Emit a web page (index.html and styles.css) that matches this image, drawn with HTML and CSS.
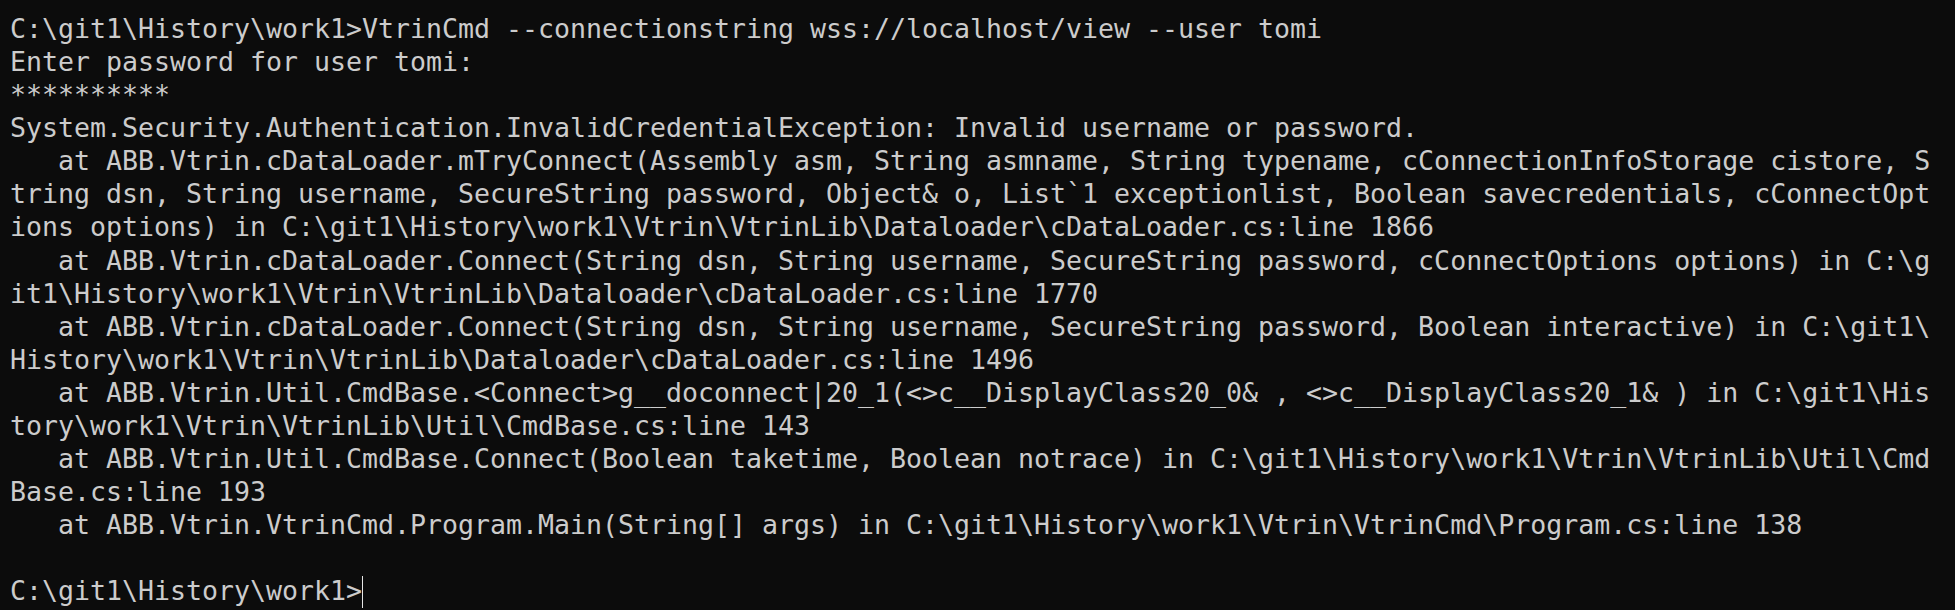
FILE: index.html
```html
<!DOCTYPE html>
<html>
<head>
<meta charset="utf-8">
<link rel="stylesheet" href="styles.css">
</head>
<body>
<div class="term"><pre class="out">C:\git1\History\work1&gt;VtrinCmd --connectionstring wss://localhost/view --user tomi
Enter password for user tomi:
**********
System.Security.Authentication.InvalidCredentialException: Invalid username or password.
   at ABB.Vtrin.cDataLoader.mTryConnect(Assembly asm, String asmname, String typename, cConnectionInfoStorage cistore, S
tring dsn, String username, SecureString password, Object&amp; o, List`1 exceptionlist, Boolean savecredentials, cConnectOpt
ions options) in C:\git1\History\work1\Vtrin\VtrinLib\Dataloader\cDataLoader.cs:line 1866
   at ABB.Vtrin.cDataLoader.Connect(String dsn, String username, SecureString password, cConnectOptions options) in C:\g
it1\History\work1\Vtrin\VtrinLib\Dataloader\cDataLoader.cs:line 1770
   at ABB.Vtrin.cDataLoader.Connect(String dsn, String username, SecureString password, Boolean interactive) in C:\git1\
History\work1\Vtrin\VtrinLib\Dataloader\cDataLoader.cs:line 1496
   at ABB.Vtrin.Util.CmdBase.&lt;Connect&gt;g__doconnect|20_1(&lt;&gt;c__DisplayClass20_0&amp; , &lt;&gt;c__DisplayClass20_1&amp; ) in C:\git1\His
tory\work1\Vtrin\VtrinLib\Util\CmdBase.cs:line 143
   at ABB.Vtrin.Util.CmdBase.Connect(Boolean taketime, Boolean notrace) in C:\git1\History\work1\Vtrin\VtrinLib\Util\Cmd
Base.cs:line 193
   at ABB.Vtrin.VtrinCmd.Program.Main(String[] args) in C:\git1\History\work1\Vtrin\VtrinCmd\Program.cs:line 138

C:\git1\History\work1&gt;<span class="cursor"></span></pre></div>
</body>
</html>
```
FILE: styles.css
```css
html, body {
  margin: 0;
  padding: 0;
  background: #0c0c0c;
  height: 100%;
  overflow: hidden;
}
.term {
  padding: 12px 0 0 10px;
}
.out {
  margin: 0;
  font-family: "DejaVu Sans Mono", "Liberation Mono", monospace;
  font-size: 26.58px;
  line-height: 33.08px;
  color: #cccccc;
  white-space: pre;
}
.cursor {
  display: inline-block;
  width: 1px;
  height: 32px;
  background: #e6e6e6;
  vertical-align: -8px;
}
```
